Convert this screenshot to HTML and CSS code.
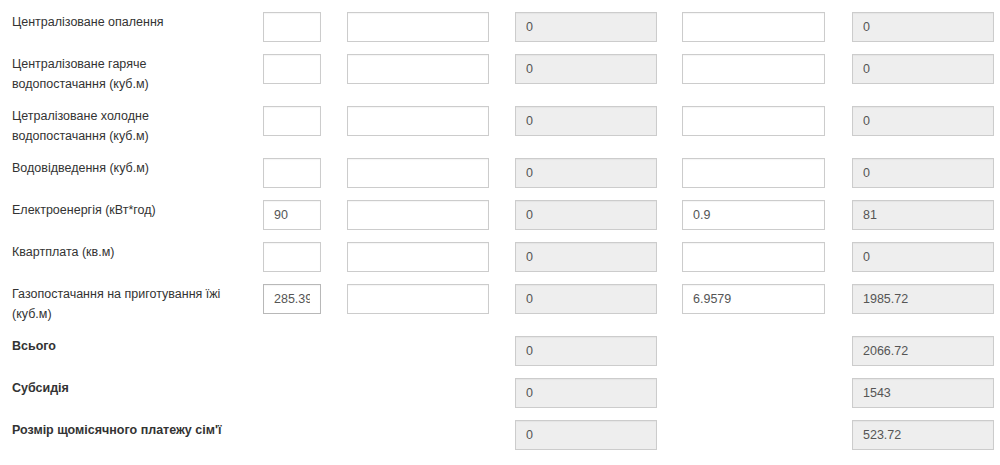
FILE: index.html
```html
<!DOCTYPE html>
<html lang="uk">
<head>
<meta charset="utf-8">
<title>Розрахунок субсидії</title>
<link rel="stylesheet" href="styles.css">
</head>
<body>
<form class="calc">
  <div class="row">
    <label class="lbl">Централізоване опалення</label>
    <input class="fld" type="text" value="">
    <input class="fld" type="text" value="">
    <input class="fld ro" type="text" value="0" readonly>
    <input class="fld" type="text" value="">
    <input class="fld ro" type="text" value="0" readonly>
  </div>
  <div class="row">
    <label class="lbl">Централізоване гаряче водопостачання (куб.м)</label>
    <input class="fld" type="text" value="">
    <input class="fld" type="text" value="">
    <input class="fld ro" type="text" value="0" readonly>
    <input class="fld" type="text" value="">
    <input class="fld ro" type="text" value="0" readonly>
  </div>
  <div class="row">
    <label class="lbl">Цетралізоване холодне водопостачання (куб.м)</label>
    <input class="fld" type="text" value="">
    <input class="fld" type="text" value="">
    <input class="fld ro" type="text" value="0" readonly>
    <input class="fld" type="text" value="">
    <input class="fld ro" type="text" value="0" readonly>
  </div>
  <div class="row">
    <label class="lbl">Водовідведення (куб.м)</label>
    <input class="fld" type="text" value="">
    <input class="fld" type="text" value="">
    <input class="fld ro" type="text" value="0" readonly>
    <input class="fld" type="text" value="">
    <input class="fld ro" type="text" value="0" readonly>
  </div>
  <div class="row">
    <label class="lbl">Електроенергія (кВт*год)</label>
    <input class="fld" type="text" value="90">
    <input class="fld" type="text" value="">
    <input class="fld ro" type="text" value="0" readonly>
    <input class="fld" type="text" value="0.9">
    <input class="fld ro" type="text" value="81" readonly>
  </div>
  <div class="row">
    <label class="lbl">Квартплата (кв.м)</label>
    <input class="fld" type="text" value="">
    <input class="fld" type="text" value="">
    <input class="fld ro" type="text" value="0" readonly>
    <input class="fld" type="text" value="">
    <input class="fld ro" type="text" value="0" readonly>
  </div>
  <div class="row">
    <label class="lbl">Газопостачання на приготування їжі (куб.м)</label>
    <input class="fld focus" type="text" value="285.39">
    <input class="fld" type="text" value="">
    <input class="fld ro" type="text" value="0" readonly>
    <input class="fld" type="text" value="6.9579">
    <input class="fld ro" type="text" value="1985.72" readonly>
  </div>
  <div class="row">
    <label class="lbl bold">Всього</label>
    <span class="empty"></span>
    <span class="empty"></span>
    <input class="fld ro" type="text" value="0" readonly>
    <span class="empty"></span>
    <input class="fld ro" type="text" value="2066.72" readonly>
  </div>
  <div class="row">
    <label class="lbl bold">Субсидія</label>
    <span class="empty"></span>
    <span class="empty"></span>
    <input class="fld ro" type="text" value="0" readonly>
    <span class="empty"></span>
    <input class="fld ro" type="text" value="1543" readonly>
  </div>
  <div class="row">
    <label class="lbl bold">Розмір щомісячного платежу сім'ї</label>
    <span class="empty"></span>
    <span class="empty"></span>
    <input class="fld ro" type="text" value="0" readonly>
    <span class="empty"></span>
    <input class="fld ro" type="text" value="523.72" readonly>
  </div>
</form>
</body>
</html>
```

FILE: styles.css
```css
html, body {
  margin: 0;
  padding: 0;
  background: #ffffff;
}

body {
  font-family: "Liberation Sans", Arial, sans-serif;
  font-size: 12.5px;
  color: #333333;
}

.calc {
  padding-top: 12px;
}

.row {
  display: grid;
  grid-template-columns: 225px 58px 142px 142px 143px 142px;
  column-gap: 26px;
  align-items: start;
  padding-left: 12px;
  margin-bottom: 12px;
}

.row .fld:nth-child(5) {
  margin-left: -1px;
}

.lbl {
  line-height: 20px;
  color: #333333;
}

.lbl.bold {
  font-weight: bold;
  white-space: nowrap;
}

.fld {
  box-sizing: border-box;
  width: 100%;
  height: 30px;
  margin: 0;
  padding: 0 10px;
  border: 1px solid #cccccc;
  border-radius: 0;
  background: #ffffff;
  font-family: "Liberation Sans", Arial, sans-serif;
  font-size: 12.5px;
  color: #555555;
  box-shadow: inset 0 1px 1px rgba(0, 0, 0, 0.04);
  outline: none;
}

.fld.ro {
  background: #eeeeee;
}

.fld.focus {
  border-color: #b8b8b8;
}

.empty {
  display: block;
  height: 30px;
}
```
